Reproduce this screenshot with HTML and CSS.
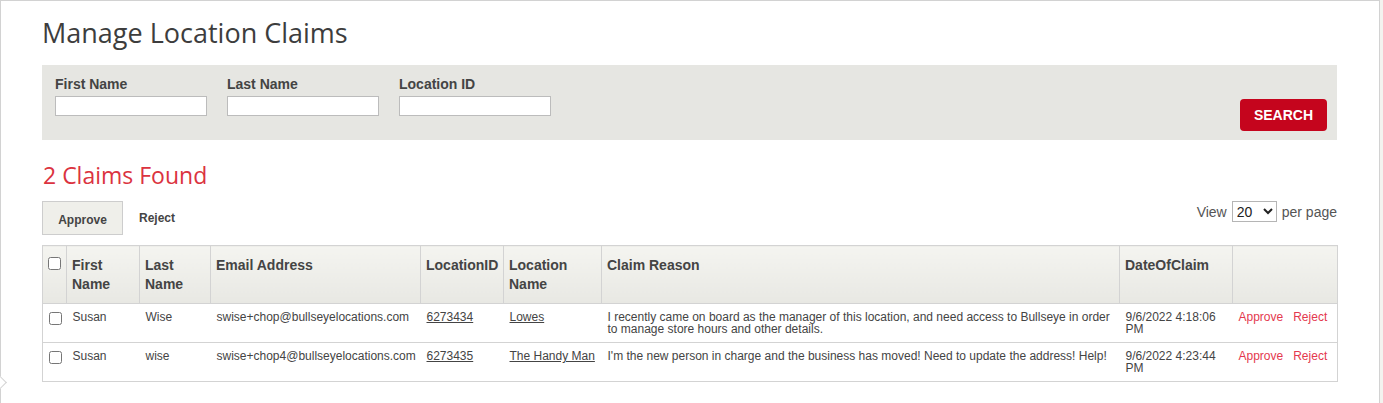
FILE: index.html
```html
<!DOCTYPE html>
<html lang="en">
<head>
    <meta charset="UTF-8">
    <title>Manage Location Claims</title>
    <link rel="stylesheet" href="styles.css">
</head>
<body>

<div class="page">
    <span class="page-notch"></span>

    <h1 class="page-title">Manage Location Claims</h1>

    <form class="filter-panel" onsubmit="return false;">
        <div class="filter-fields">
            <div class="field">
                <label for="first-name">First Name</label>
                <input type="text" id="first-name">
            </div>
            <div class="field">
                <label for="last-name">Last Name</label>
                <input type="text" id="last-name">
            </div>
            <div class="field">
                <label for="location-id">Location ID</label>
                <input type="text" id="location-id">
            </div>
        </div>
        <button class="btn-search" type="submit">SEARCH</button>
    </form>

    <h2 class="results-title">2 Claims Found</h2>

    <div class="action-bar">
        <div class="bulk-actions">
            <button class="btn-bulk active">Approve</button>
            <button class="btn-bulk">Reject</button>
        </div>
        <div class="page-size">
            View
            <select>
                <option>10</option>
                <option selected>20</option>
                <option>50</option>
            </select>
            per page
        </div>
    </div>

    <table class="claims-table">
        <colgroup>
            <col style="width:24px">
            <col style="width:73px">
            <col style="width:71px">
            <col style="width:210px">
            <col style="width:83px">
            <col style="width:98px">
            <col style="width:518px">
            <col style="width:113px">
            <col style="width:105px">
        </colgroup>
        <thead>
            <tr>
                <th><input type="checkbox"></th>
                <th>First Name</th>
                <th>Last Name</th>
                <th>Email Address</th>
                <th>LocationID</th>
                <th>Location Name</th>
                <th>Claim Reason</th>
                <th>DateOfClaim</th>
                <th></th>
            </tr>
        </thead>
        <tbody>
            <tr>
                <td><input type="checkbox"></td>
                <td>Susan</td>
                <td>Wise</td>
                <td>swise+chop@bullseyelocations.com</td>
                <td><a href="#">6273434</a></td>
                <td><a href="#">Lowes</a></td>
                <td>I recently came on board as the manager of this location, and need access to Bullseye in order to manage store hours and other details.</td>
                <td>9/6/2022 4:18:06 PM</td>
                <td class="row-actions"><a href="#">Approve</a><a href="#">Reject</a></td>
            </tr>
            <tr>
                <td><input type="checkbox"></td>
                <td>Susan</td>
                <td>wise</td>
                <td>swise+chop4@bullseyelocations.com</td>
                <td><a href="#">6273435</a></td>
                <td><a href="#">The Handy Man</a></td>
                <td>I'm the new person in charge and the business has moved! Need to update the address! Help!</td>
                <td>9/6/2022 4:23:44 PM</td>
                <td class="row-actions"><a href="#">Approve</a><a href="#">Reject</a></td>
            </tr>
        </tbody>
    </table>
</div>

</body>
</html>
```

FILE: styles.css
```css
/* General Styling */
* {
    box-sizing: border-box;
}

body {
    margin: 0;
    background: #f3f3ef;
    font-family: "Liberation Sans", Arial, sans-serif;
    color: #444;
}

.page {
    position: relative;
    width: 1380px;
    min-height: 420px;
    background: #fff;
    border: 1px solid #d2d2d2;
    padding: 0 42px 0 41px;
}

/* little tab on the left edge */
.page-notch {
    position: absolute;
    left: -5px;
    top: 377px;
    width: 9px;
    height: 9px;
    background: #fff;
    border-top: 1px solid #d2d2d2;
    border-right: 1px solid #d2d2d2;
    transform: rotate(45deg);
}

.page-title {
    font-family: "Open Sans", sans-serif;
    font-weight: normal;
    font-size: 27px;
    color: #3d3d3d;
    margin: 13px 0 14px;
}

/* Filter panel */
.filter-panel {
    display: flex;
    justify-content: space-between;
    height: 75px;
    background: #e6e6e2;
    padding: 11px 10px 9px 13px;
}

.filter-fields {
    display: flex;
    gap: 20px;
    align-self: flex-start;
}

.field label {
    display: block;
    font-size: 14px;
    font-weight: bold;
    line-height: 16px;
    margin-bottom: 4px;
}

.field input {
    display: block;
    width: 152px;
    height: 20px;
    margin: 0;
    border: 1px solid #bcbcbc;
    background: #fff;
}

.btn-search {
    align-self: flex-end;
    width: 87px;
    height: 32px;
    background: #c5051d;
    color: #fff;
    border: none;
    border-radius: 4px;
    font-family: "Liberation Sans", Arial, sans-serif;
    font-size: 14px;
    font-weight: bold;
    cursor: pointer;
}

.results-title {
    font-family: "Open Sans", sans-serif;
    font-weight: normal;
    font-size: 23px;
    color: #db3340;
    margin: 19px 0 10px 1px;
}

/* Bulk actions and paging */
.action-bar {
    display: flex;
    justify-content: space-between;
    align-items: flex-start;
    margin-bottom: 10px;
}

.bulk-actions {
    display: flex;
}

.btn-bulk {
    height: 34px;
    padding: 0 15px;
    margin: 0;
    background: none;
    border: 1px solid transparent;
    font-family: "Liberation Sans", Arial, sans-serif;
    font-size: 12px;
    font-weight: bold;
    color: #444;
    line-height: 32px;
    cursor: pointer;
}

.btn-bulk.active {
    width: 81px;
    background: #efefea;
    border-color: #cdcdcd;
    padding-top: 2px;
}

.page-size {
    font-size: 14px;
    color: #555;
    display: flex;
    align-items: center;
    gap: 5px;
    height: 21px;
}

.page-size select {
    width: 45px;
    height: 21px;
    font-family: "Liberation Sans", Arial, sans-serif;
    font-size: 14px;
    color: #222;
    border: 1px solid #b5b5b5;
    background: #fff;
    margin: 0;
}

/* Claims table */
.claims-table {
    width: 1295px;
    table-layout: fixed;
    border-collapse: collapse;
    border: 1px solid #d3d3d3;
}

.claims-table th {
    background: linear-gradient(#f4f4f0, #e8e8e3);
    border: 1px solid #d3d3d3;
    text-align: left;
    vertical-align: top;
    font-size: 14px;
    line-height: 19px;
    padding: 10px 6px 9px 5px;
    height: 58px;
}

.claims-table td {
    border-top: 1px solid #d3d3d3;
    vertical-align: top;
    font-size: 12px;
    line-height: 12px;
    padding: 7px 6px;
    height: 39px;
}

.claims-table input[type="checkbox"] {
    display: block;
    width: 13px;
    height: 13px;
    margin: 1px 0 0;
}

.claims-table td a {
    color: #444;
}

.claims-table .row-actions a {
    color: #e4384e;
    text-decoration: none;
    margin-right: 10px;
}

.claims-table .row-actions a:last-child {
    margin-right: 0;
}
```
